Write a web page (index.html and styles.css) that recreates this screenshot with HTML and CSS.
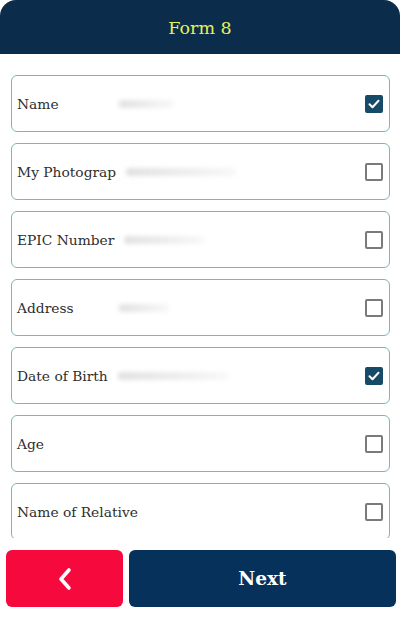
FILE: index.html
```html
<!DOCTYPE html>
<html>
<head>
<meta charset="utf-8">
<link rel="stylesheet" href="styles.css">
</head>
<body>
<div class="screen">
  <header class="topbar"><h1 class="title">Form 8</h1></header>
  <main class="list">
    <div class="card"><span class="label">Name</span><span class="smudge s1"></span><span class="box checked"><svg viewBox="0 0 18 18" width="18" height="18"><path d="M4.5 9.2l3 3 6-6.4" fill="none" stroke="#fff" stroke-width="2" stroke-linecap="round" stroke-linejoin="round"/></svg></span></div>
    <div class="card"><span class="label">My Photograp</span><span class="smudge s2"></span><span class="box"></span></div>
    <div class="card"><span class="label">EPIC Number</span><span class="smudge s3"></span><span class="box"></span></div>
    <div class="card"><span class="label">Address</span><span class="smudge s4"></span><span class="box"></span></div>
    <div class="card"><span class="label">Date of Birth</span><span class="smudge s2"></span><span class="box checked"><svg viewBox="0 0 18 18" width="18" height="18"><path d="M4.5 9.2l3 3 6-6.4" fill="none" stroke="#fff" stroke-width="2" stroke-linecap="round" stroke-linejoin="round"/></svg></span></div>
    <div class="card"><span class="label">Age</span><span class="smudge s5"></span><span class="box"></span></div>
    <div class="card"><span class="label">Name of Relative</span><span class="smudge s5"></span><span class="box"></span></div>
  </main>
  <footer class="actions">
    <button class="btn back"><svg viewBox="0 0 14 24" width="14" height="24"><path d="M11 3L3 12l8 9" fill="none" stroke="#fff" stroke-width="3.6" stroke-linecap="round" stroke-linejoin="round"/></svg></button>
    <button class="btn next">Next</button>
  </footer>
</div>
</body>
</html>
```

FILE: styles.css
```css
* { box-sizing: border-box; }
html, body { margin: 0; padding: 0; background: #000; }
.screen {
  width: 400px;
  height: 618px;
  background: #fff;
  display: flex;
  flex-direction: column;
  font-family: "DejaVu Serif", "Liberation Serif", serif;
  overflow: hidden;
}
.topbar {
  height: 54px;
  flex: 0 0 54px;
  background: #0c2c4c;
  border-radius: 16px 16px 0 0;
  display: flex;
  align-items: center;
  justify-content: center;
}
.title {
  margin: 0;
  font-size: 17.5px;
  font-weight: normal;
  color: #e6f05a;
  padding-top: 1px;
}
.list {
  height: 484px;
  flex: 0 0 484px;
  overflow: hidden;
  padding: 21px 10px 0 11px;
  display: flex;
  flex-direction: column;
  gap: 11px;
}
.card {
  flex: 0 0 57px;
  height: 57px;
  border: 1.6px solid #7fb3c1;
  border-radius: 6px;
  display: flex;
  align-items: center;
  padding: 0 6px 0 5px;
  position: relative;
}
.label {
  font-size: 13.8px;
  color: #2e2e2e;
  white-space: nowrap;
  padding-top: 1px;
}
.smudge {
  flex: 0 0 auto;
  height: 8px;
  margin-left: 10px;
  background: linear-gradient(90deg, rgba(200,200,200,0.55), rgba(220,220,220,0.2));
  filter: blur(2px);
  border-radius: 3px;
}
.s1 { width: 55px; margin-left: 60px; }
.s2 { width: 110px; }
.s3 { width: 80px; }
.s4 { width: 50px; margin-left: 45px; }
.s5 { width: 0; }
.box {
  margin-left: auto;
  width: 18px;
  height: 18px;
  border: 2px solid #7a7a7a;
  border-radius: 2px;
  display: flex;
  align-items: center;
  justify-content: center;
}
.box.checked {
  background: #174a66;
  border-color: #174a66;
}
.box svg { display: block; flex: 0 0 auto; }
.actions {
  flex: 1;
  display: flex;
  gap: 6px;
  padding: 12px 4px 11px 6px;
  background: #fff;
}
.btn {
  border: none;
  border-radius: 6px;
  display: flex;
  align-items: center;
  justify-content: center;
  padding: 0;
  font-family: "DejaVu Serif", "Liberation Serif", serif;
}
.back {
  width: 117px;
  flex: 0 0 117px;
  background: #f60a3e;
}
.next {
  flex: 1;
  background: #06315a;
  color: #fff;
  font-size: 18.5px;
  font-weight: bold;
}
```
